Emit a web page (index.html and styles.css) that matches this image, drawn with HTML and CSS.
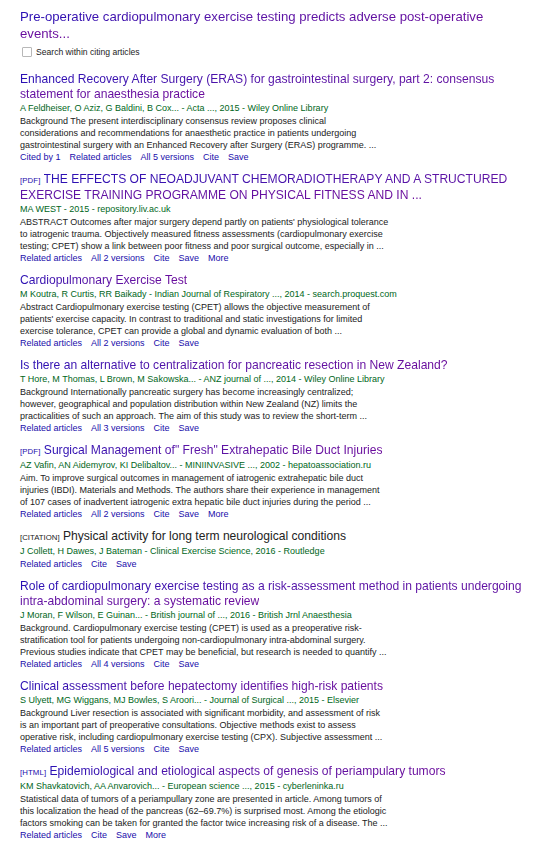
FILE: index.html
```html
<!DOCTYPE html>
<html lang="en">
<head>
<meta charset="utf-8">
<title>Citing articles</title>
<link rel="stylesheet" href="styles.css">
</head>
<body>
<div class="page">
  <div class="head">
    <h2 class="qtitle"><a href="#">Pre-operative cardiopulmonary exercise testing predicts adverse post-operative<br>events...</a></h2>
    <label class="within"><span class="cb"></span><span>Search within citing articles</span></label>
  </div>

  <div class="result">
    <h3 class="rt"><a href="#">Enhanced Recovery After Surgery (ERAS) for gastrointestinal surgery, part 2: consensus<br>statement for anaesthesia practice</a></h3>
    <div class="meta">A Feldheiser, O Aziz, G Baldini, B Cox... - Acta ..., 2015 - Wiley Online Library</div>
    <div class="snip">Background The present interdisciplinary consensus review proposes clinical<br>considerations and recommendations for anaesthetic practice in patients undergoing<br>gastrointestinal surgery with an Enhanced Recovery after Surgery (ERAS) programme. ...</div>
    <div class="links"><a href="#">Cited by 1</a><a href="#">Related articles</a><a href="#">All 5 versions</a><a href="#">Cite</a><a href="#">Save</a></div>
  </div>

  <div class="result">
    <h3 class="rt"><span class="tag">[PDF]</span> <a href="#">THE EFFECTS OF NEOADJUVANT CHEMORADIOTHERAPY AND A STRUCTURED<br>EXERCISE TRAINING PROGRAMME ON PHYSICAL FITNESS AND IN ...</a></h3>
    <div class="meta">MA WEST - 2015 - repository.liv.ac.uk</div>
    <div class="snip">ABSTRACT Outcomes after major surgery depend partly on patients' physiological tolerance<br>to iatrogenic trauma. Objectively measured fitness assessments (cardiopulmonary exercise<br>testing; CPET) show a link between poor fitness and poor surgical outcome, especially in ...</div>
    <div class="links"><a href="#">Related articles</a><a href="#">All 2 versions</a><a href="#">Cite</a><a href="#">Save</a><a href="#">More</a></div>
  </div>

  <div class="result">
    <h3 class="rt"><a href="#">Cardiopulmonary Exercise Test</a></h3>
    <div class="meta">M Koutra, R Curtis, RR Baikady - Indian Journal of Respiratory ..., 2014 - search.proquest.com</div>
    <div class="snip">Abstract Cardiopulmonary exercise testing (CPET) allows the objective measurement of<br>patients' exercise capacity. In contrast to traditional and static investigations for limited<br>exercise tolerance, CPET can provide a global and dynamic evaluation of both ...</div>
    <div class="links"><a href="#">Related articles</a><a href="#">All 2 versions</a><a href="#">Cite</a><a href="#">Save</a></div>
  </div>

  <div class="result">
    <h3 class="rt"><a href="#">Is there an alternative to centralization for pancreatic resection in New Zealand?</a></h3>
    <div class="meta">T Hore, M Thomas, L Brown, M Sakowska... - ANZ journal of ..., 2014 - Wiley Online Library</div>
    <div class="snip">Background Internationally pancreatic surgery has become increasingly centralized;<br>however, geographical and population distribution within New Zealand (NZ) limits the<br>practicalities of such an approach. The aim of this study was to review the short-term ...</div>
    <div class="links"><a href="#">Related articles</a><a href="#">All 3 versions</a><a href="#">Cite</a><a href="#">Save</a></div>
  </div>

  <div class="result">
    <h3 class="rt"><span class="tag">[PDF]</span> <a href="#">Surgical Management of" Fresh" Extrahepatic Bile Duct Injuries</a></h3>
    <div class="meta">AZ Vafin, AN Aidemyrov, KI Delibaltov... - MINIINVASIVE ..., 2002 - hepatoassociation.ru</div>
    <div class="snip">Aim. To improve surgical outcomes in management of iatrogenic extrahepatic bile duct<br>injuries (IBDI). Materials and Methods. The authors share their experience in management<br>of 107 cases of inadvertent iatrogenic extra hepatic bile duct injuries during the period ...</div>
    <div class="links"><a href="#">Related articles</a><a href="#">All 2 versions</a><a href="#">Cite</a><a href="#">Save</a><a href="#">More</a></div>
  </div>

  <div class="result">
    <h3 class="rt"><span class="tag cit">[CITATION]</span> <span class="plain">Physical activity for long term neurological conditions</span></h3>
    <div class="meta">J Collett, H Dawes, J Bateman - Clinical Exercise Science, 2016 - Routledge</div>
    <div class="links"><a href="#">Related articles</a><a href="#">Cite</a><a href="#">Save</a></div>
  </div>

  <div class="result">
    <h3 class="rt"><a href="#">Role of cardiopulmonary exercise testing as a risk-assessment method in patients undergoing<br>intra-abdominal surgery: a systematic review</a></h3>
    <div class="meta">J Moran, F Wilson, E Guinan... - British journal of ..., 2016 - British Jrnl Anaesthesia</div>
    <div class="snip">Background. Cardiopulmonary exercise testing (CPET) is used as a preoperative risk-<br>stratification tool for patients undergoing non-cardiopulmonary intra-abdominal surgery.<br>Previous studies indicate that CPET may be beneficial, but research is needed to quantify ...</div>
    <div class="links"><a href="#">Related articles</a><a href="#">All 4 versions</a><a href="#">Cite</a><a href="#">Save</a></div>
  </div>

  <div class="result">
    <h3 class="rt"><a href="#">Clinical assessment before hepatectomy identifies high-risk patients</a></h3>
    <div class="meta">S Ulyett, MG Wiggans, MJ Bowles, S Aroori... - Journal of Surgical ..., 2015 - Elsevier</div>
    <div class="snip">Background Liver resection is associated with significant morbidity, and assessment of risk<br>is an important part of preoperative consultations. Objective methods exist to assess<br>operative risk, including cardiopulmonary exercise testing (CPX). Subjective assessment ...</div>
    <div class="links"><a href="#">Related articles</a><a href="#">All 5 versions</a><a href="#">Cite</a><a href="#">Save</a></div>
  </div>

  <div class="result">
    <h3 class="rt"><span class="tag">[HTML]</span> <a href="#">Epidemiological and etiological aspects of genesis of periampulary tumors</a></h3>
    <div class="meta">KM Shavkatovich, AA Anvarovich... - European science ..., 2015 - cyberleninka.ru</div>
    <div class="snip">Statistical data of tumors of a periampullary zone are presented in article. Among tumors of<br>this localization the head of the pancreas (62&ndash;69.7%) is surprised most. Among the etiologic<br>factors smoking can be taken for granted the factor twice increasing risk of a disease. The ...</div>
    <div class="links"><a href="#">Related articles</a><a href="#">Cite</a><a href="#">Save</a><a href="#">More</a></div>
  </div>
</div>
</body>
</html>
```

FILE: styles.css
```css
html, body {
  margin: 0;
  padding: 0;
  background: #fff;
}

body {
  font-family: "Liberation Sans", Arial, sans-serif;
  color: #222;
}

a {
  text-decoration: none;
}

.page {
  padding: 8px 0 0 20px;
  display: flex;
  flex-direction: column;
}

.head {
  display: flex;
  flex-direction: column;
}

.qtitle {
  margin: 0;
  font-size: 13.2px;
  font-weight: normal;
  line-height: 17px;
}

.qtitle a,
.rt a {
  background: linear-gradient(90deg, #2a10b4 0%, #5b14a6 45%, #6a0c9c 100%);
  -webkit-background-clip: text;
  background-clip: text;
  color: transparent;
}

.rt .plain {
  color: #222;
}

.within {
  display: flex;
  align-items: center;
  gap: 4px;
  margin: 4px 0 0 2px;
  height: 12px;
  font-size: 8.6px;
  color: #222;
}

.cb {
  width: 8px;
  height: 8px;
  border: 1px solid #b8b8b8;
  border-radius: 1px;
  background: #fff;
}

.head + .result {
  margin-top: 14px;
}

.result {
  margin-bottom: 8px;
  display: flex;
  flex-direction: column;
}

.rt {
  margin: 0;
  font-size: 12.1px;
  font-weight: normal;
  line-height: 15px;
}

.tag {
  font-size: 7.8px;
  color: #1a0dab;
  letter-spacing: 0.1px;
}

.tag.cit {
  color: #222;
  letter-spacing: 0;
}

.meta {
  font-size: 9px;
  line-height: 13px;
  color: #006621;
  white-space: nowrap;
}

.snip {
  font-size: 9px;
  line-height: 12px;
  color: #222;
  white-space: nowrap;
}

.links {
  display: flex;
  gap: 9px;
  font-size: 9px;
  line-height: 13px;
}

.links a {
  color: #1a0dab;
}
```
